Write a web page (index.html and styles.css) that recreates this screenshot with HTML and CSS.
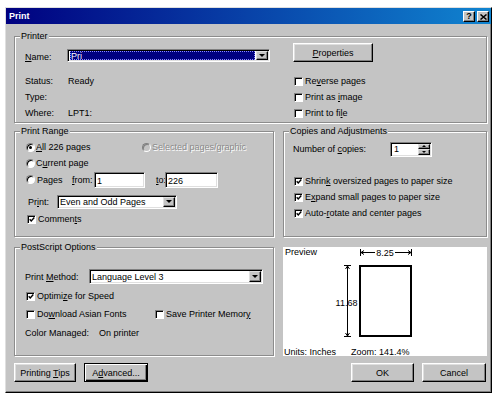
FILE: index.html
```html
<!DOCTYPE html>
<html lang="en">
<head>
  <meta charset="UTF-8" />
  <meta name="viewport" content="width=device-width, initial-scale=1.0" />
  <title>Print</title>
  <link rel="stylesheet" href="styles.css">
</head>
<body>
  <div class="dialog">
    <div class="titlebar">
      <span class="title">Print</span>
      <div class="caption-btns">
        <span class="cap-btn">?</span>
        <span class="cap-btn">
          <svg width="7" height="6" viewBox="0 0 7 6"><path d="M0.5 0.5 L6.5 5.5 M6.5 0.5 L0.5 5.5" stroke="#000" stroke-width="1.5"/></svg>
        </span>
      </div>
    </div>

    <div class="content">
      <!-- 打印机 -->
      <div class="group printer">
        <div class="group-title">Printer</div>
        <div class="printer-grid">
          <div class="name-row">
            <span class="w-name"><u>N</u>ame:</span>
            <div class="combo combo-name">
              <div class="combo-field"><span class="sel">Pri</span></div>
              <span class="combo-btn"></span>
            </div>
          </div>
          <div class="props-cell"><button class="btn btn-props"><u>P</u>roperties</button></div>

          <div class="row"><span class="w-info">Status:</span><span>Ready</span></div>
          <div class="row check"><span class="box"></span><span>Re<u>v</u>erse pages</span></div>
          <div class="row"><span class="w-info">Type:</span></div>
          <div class="row check"><span class="box"></span><span>Print as <u>i</u>mage</span></div>
          <div class="row"><span class="w-info">Where:</span><span>LPT1:</span></div>
          <div class="row check"><span class="box"></span><span>Print to fi<u>l</u>e</span></div>
        </div>
      </div>

      <div class="mid">
        <!-- 打印范围 -->
        <div class="group">
          <div class="group-title">Print Range</div>
          <div class="range-body">
            <div class="row">
              <div class="opt w-all"><span class="radio on"></span><span><u>A</u>ll 226 pages</span></div>
              <div class="opt disabled"><span class="radio dim"></span><span>Selected pages/graphic</span></div>
            </div>
            <div class="row"><span class="radio"></span><span>C<u>u</u>rrent page</span></div>
            <div class="row pages-row">
              <span class="radio"></span>
              <span class="w-pages">Pa<u>g</u>es</span>
              <span class="w-from"><u>f</u>rom:</span>
              <span class="textbox tb-from">1</span>
              <span class="w-to"><u>t</u>o:</span>
              <span class="textbox tb-to">226</span>
            </div>
            <div class="row print-row">
              <span class="w-print">Pr<u>i</u>nt:</span>
              <div class="combo combo-print">
                <div class="combo-field">Even and Odd Pages</div>
                <span class="combo-btn"></span>
              </div>
            </div>
            <div class="row comments-row check"><span class="box on"><svg width="7" height="7" viewBox="0 0 7 7"><path d="M0.8 3.2 L2.6 5.2 L6.2 1.2" fill="none" stroke="#000" stroke-width="1.6"/></svg></span><span>Commen<u>t</u>s</span></div>
          </div>
        </div>

        <!-- 份数与调整 -->
        <div class="group">
          <div class="group-title">Copies and Adjustments</div>
          <div class="copies-body">
            <div class="row">
              <span class="w-copies">Number of <u>c</u>opies:</span>
              <div class="spin">
                <div class="spin-field">1</div>
                <div class="spin-btns">
                  <span class="spin-btn up"></span>
                  <span class="spin-btn down"></span>
                </div>
              </div>
            </div>
            <div class="row check first-check"><span class="box on"><svg width="7" height="7" viewBox="0 0 7 7"><path d="M0.8 3.2 L2.6 5.2 L6.2 1.2" fill="none" stroke="#000" stroke-width="1.6"/></svg></span><span>Shrin<u>k</u> oversized pages to paper size</span></div>
            <div class="row check"><span class="box on"><svg width="7" height="7" viewBox="0 0 7 7"><path d="M0.8 3.2 L2.6 5.2 L6.2 1.2" fill="none" stroke="#000" stroke-width="1.6"/></svg></span><span>E<u>x</u>pand small pages to paper size</span></div>
            <div class="row check"><span class="box on"><svg width="7" height="7" viewBox="0 0 7 7"><path d="M0.8 3.2 L2.6 5.2 L6.2 1.2" fill="none" stroke="#000" stroke-width="1.6"/></svg></span><span>Auto-<u>r</u>otate and center pages</span></div>
          </div>
        </div>
      </div>

      <div class="low">
        <!-- PostScript 选项 -->
        <div class="group">
          <div class="group-title">PostScript Options</div>
          <div class="ps-body">
            <div class="row method-row">
              <span class="w-method">Print <u>M</u>ethod:</span>
              <div class="combo combo-method">
                <div class="combo-field">Language Level 3</div>
                <span class="combo-btn"></span>
              </div>
            </div>
            <div class="row check optimize-row"><span class="box on"><svg width="7" height="7" viewBox="0 0 7 7"><path d="M0.8 3.2 L2.6 5.2 L6.2 1.2" fill="none" stroke="#000" stroke-width="1.6"/></svg></span><span>Optimi<u>z</u>e for Speed</span></div>
            <div class="row fonts-row">
              <div class="check w-download"><span class="box"></span><span>Do<u>w</u>nload Asian Fonts</span></div>
              <div class="check"><span class="box"></span><span>Save Printer Memor<u>y</u></span></div>
            </div>
            <div class="row color-row"><span class="w-color">Color Managed:</span><span>On printer</span></div>
          </div>
        </div>

        <!-- 预览 -->
        <div class="preview">
          <svg class="preview-art" width="204" height="109" viewBox="0 0 204 109">
            <g stroke="#000" stroke-width="1" fill="none">
              <path d="M77.5 2 V9 M78 5.5 H92 M78 5.5 l3 -2 M78 5.5 l3 2"/>
              <path d="M128.5 2 V9 M112 5.5 H128 M128 5.5 l-3 -2 M128 5.5 l-3 2"/>
              <path d="M61 18.5 H68 M64.5 19 V90 M64.5 19 l-2 3 M64.5 19 l2 3"/>
              <path d="M61 89.5 H68 M64.5 89 l-2 -3 M64.5 89 l2 -3"/>
              <rect x="77" y="19" width="51" height="70" stroke-width="2"/>
            </g>
            <text x="102" y="9" text-anchor="middle" class="dim-text">8.25</text>
            <text x="63.5" y="58.5" text-anchor="middle" class="dim-text">11.68</text>
          </svg>
          <div class="preview-text">
            <div class="preview-cap">Preview</div>
            <div class="preview-foot">
              <span class="w-units">Units: Inches</span>
              <span>Zoom: 141.4%</span>
            </div>
          </div>
        </div>
      </div>

      <div class="buttons">
        <div class="btn-group">
          <button class="btn btn-tips">Printing <u>T</u>ips</button>
          <button class="btn btn-adv default">A<u>d</u>vanced...</button>
        </div>
        <div class="btn-group">
          <button class="btn btn-ok">OK</button>
          <button class="btn btn-cancel">Cancel</button>
        </div>
      </div>
    </div>
  </div>
</body>
</html>
```

FILE: styles.css
```css
* {
  box-sizing: border-box;
}

body {
  margin: 7px 0 0 5px;
  background: #fff;
  font: 9px/12px "Liberation Sans", Arial, sans-serif;
  color: #000;
}

u {
  text-decoration: underline;
  text-underline-offset: 1px;
}

/* 窗口 */
.dialog {
  width: 487px;
  height: 386px;
  background: #c4c4c4;
  border: 1px solid;
  border-color: #dfdfdf #000 #000 #dfdfdf;
  box-shadow: inset -1px -1px #808080;
  display: flex;
  flex-direction: column;
}

.titlebar {
  height: 16px;
  background: linear-gradient(to right, #000080, #1084d0);
  display: flex;
  justify-content: space-between;
  padding: 0 2px 0 3px;
}
.title {
  color: #fff;
  font-weight: bold;
  line-height: 16px;
}
.caption-btns {
  display: flex;
  gap: 2px;
  margin-top: 3px;
}
.cap-btn {
  width: 12px;
  height: 11px;
  background: #c4c4c4;
  border: 1px solid;
  border-color: #fff #000 #000 #fff;
  box-shadow: inset -1px -1px #808080;
  display: flex;
  align-items: center;
  justify-content: center;
  font-weight: bold;
  font-size: 9px;
  line-height: 9px;
}

.content {
  padding: 12px 4px 0 8px;
}

/* 分组框 */
.group {
  border: 1px solid #8c8c8c;
  box-shadow: inset 1px 1px #fff, 1px 1px #fff;
  min-width: 0;
}
.group-title {
  margin: -7px 0 0 5px;
  padding: 0 1px;
  width: max-content;
  background: #c4c4c4;
  line-height: 12px;
}

.row {
  display: flex;
  align-items: center;
  height: 16px;
  white-space: nowrap;
}
.check,
.opt {
  display: flex;
  align-items: center;
  white-space: nowrap;
}

.printer {
  height: 87px;
}
.printer-grid {
  display: grid;
  grid-template-columns: 268px 1fr;
  grid-template-rows: 30px 16px 16px 16px;
  margin-top: 1px;
  padding-left: 10px;
}
.name-row {
  display: flex;
  align-items: flex-end;
  height: 20px;
}
.w-name {
  width: 42px;
}
.w-info {
  width: 43px;
}
.props-cell {
  height: 20px;
}

.mid,
.low {
  display: grid;
  grid-template-columns: 260px 204px;
  column-gap: 9px;
}
.mid {
  height: 106px;
  margin-top: 8px;
}
.low {
  height: 109px;
  margin-top: 10px;
}

/* 控件 */
.box {
  width: 9px;
  height: 9px;
  flex: none;
  background: #fff;
  border: 1px solid;
  border-color: #808080 #fff #fff #808080;
  box-shadow: inset 1px 1px #000;
  margin: 0 2px 0 1px;
  display: flex;
  align-items: center;
  justify-content: center;
}
.box svg {
  display: block;
  margin: 1px 0 0 1px;
}
.radio {
  width: 9px;
  height: 9px;
  flex: none;
  border-radius: 50%;
  background: #fff;
  border: 1px solid;
  border-color: #808080 #fff #fff #808080;
  box-shadow: inset 1px 1px #000;
  margin-right: 1px;
  display: flex;
  align-items: center;
  justify-content: center;
}
.radio.on::after {
  content: "";
  width: 3px;
  height: 3px;
  border-radius: 50%;
  background: #000;
}
.radio.dim {
  background: #c4c4c4;
  box-shadow: inset 1px 1px #808080;
}
.disabled {
  color: #8a8a8a;
  text-shadow: 1px 1px #fff;
}

.combo,
.textbox,
.spin {
  background: #fff;
  border: 1px solid;
  border-color: #808080 #fff #fff #808080;
  box-shadow: inset 1px 1px #000, inset -1px -1px #dfdfdf;
}
.combo {
  display: flex;
  padding: 1px 1px 1px 2px;
}
.combo-field {
  flex: 1;
  display: flex;
  align-items: center;
  line-height: 10px;
  white-space: nowrap;
  overflow: hidden;
}
.combo-btn,
.spin-btn {
  background: #c4c4c4;
  border: 1px solid;
  border-color: #dfdfdf #000 #000 #dfdfdf;
  box-shadow: inset -1px -1px #808080;
  display: flex;
  align-items: center;
  justify-content: center;
}
.combo-btn {
  width: 12px;
}
.combo-btn::after {
  content: "";
  border-left: 3px solid transparent;
  border-right: 3px solid transparent;
  border-top: 3px solid #000;
}
.sel {
  flex: 1;
  align-self: stretch;
  background: #000080;
  color: #fff;
  padding-left: 1px;
  margin-right: 1px;
  display: flex;
  align-items: center;
  outline: 1px dotted #8c8cff;
  outline-offset: -1px;
}
.combo-name {
  width: 203px;
  height: 13px;
  margin-bottom: 1px;
}
.combo-print {
  width: 120px;
  height: 14px;
}
.combo-method {
  width: 174px;
  height: 15px;
}

.textbox {
  height: 16px;
  padding: 2px 0 0 2px;
  line-height: 12px;
}
.tb-from {
  width: 51px;
}
.tb-to {
  width: 53px;
}

.spin {
  width: 42px;
  height: 15px;
  display: flex;
  padding: 1px;
}
.spin-field {
  flex: 1;
  padding-left: 2px;
  line-height: 11px;
}
.spin-btns {
  width: 12px;
  display: flex;
  flex-direction: column;
}
.spin-btn {
  flex: 1;
}
.spin-btn.up::after {
  content: "";
  border-left: 2px solid transparent;
  border-right: 2px solid transparent;
  border-bottom: 2px solid #000;
}
.spin-btn.down::after {
  content: "";
  border-left: 2px solid transparent;
  border-right: 2px solid transparent;
  border-top: 2px solid #000;
}

/* 打印范围 */
.range-body {
  padding: 2px 0 0 11px;
}
.w-all {
  width: 116px;
}
.pages-row {
  height: 17px;
}
.w-pages {
  width: 35px;
  margin-left: 1px;
}
.w-from {
  width: 22px;
}
.w-to {
  width: 9px;
  margin-left: 11px;
}
.print-row {
  height: 17px;
  margin-top: 5px;
}
.w-print {
  width: 29px;
  margin-left: 2px;
}
.comments-row {
  margin-top: 1px;
}

/* 份数 */
.copies-body {
  padding: 4px 0 0 9px;
}
.w-copies {
  width: 97px;
}
.first-check {
  margin-top: 16px;
}

/* PostScript */
.ps-body {
  padding: 15px 0 0 10px;
}
.method-row {
  height: 17px;
}
.w-method {
  width: 64px;
}
.optimize-row {
  margin-top: 3px;
}
.fonts-row {
  margin-top: 2px;
}
.w-download {
  width: 129px;
}
.color-row {
  margin-top: 3px;
}
.w-color {
  width: 74px;
}

/* 预览 */
.preview {
  background: #fff;
  display: grid;
  overflow: hidden;
}
.preview-art,
.preview-text {
  grid-area: 1 / 1;
}
.preview-art {
  display: block;
}
.dim-text {
  font-family: "Liberation Sans", Arial, sans-serif;
  font-size: 9px;
}
.preview-text {
  display: flex;
  flex-direction: column;
  justify-content: space-between;
  line-height: 10px;
}
.preview-cap {
  padding-left: 2px;
}
.preview-foot {
  display: flex;
  padding-left: 1px;
  margin-bottom: -1px;
}
.w-units {
  width: 67px;
}

/* 按钮 */
.btn {
  font: inherit;
  color: #000;
  background: #c4c4c4;
  border: 1px solid;
  border-color: #fff #000 #000 #fff;
  box-shadow: inset -1px -1px #808080, inset 1px 1px #dfdfdf;
  padding: 0;
  height: 19px;
  line-height: 12px;
}
.btn.default {
  border-color: #000;
  box-shadow: inset 1px 1px #fff, inset -1px -1px #000, inset -2px -2px #808080;
}
.btn-props {
  width: 80px;
}
.buttons {
  display: flex;
  justify-content: space-between;
  margin-top: 7px;
  padding-right: 1px;
}
.btn-group {
  display: flex;
  gap: 8px;
}
.btn-tips {
  width: 62px;
}
.btn-adv {
  width: 64px;
}
.btn-ok {
  width: 63px;
}
.btn-cancel {
  width: 64px;
}
```
